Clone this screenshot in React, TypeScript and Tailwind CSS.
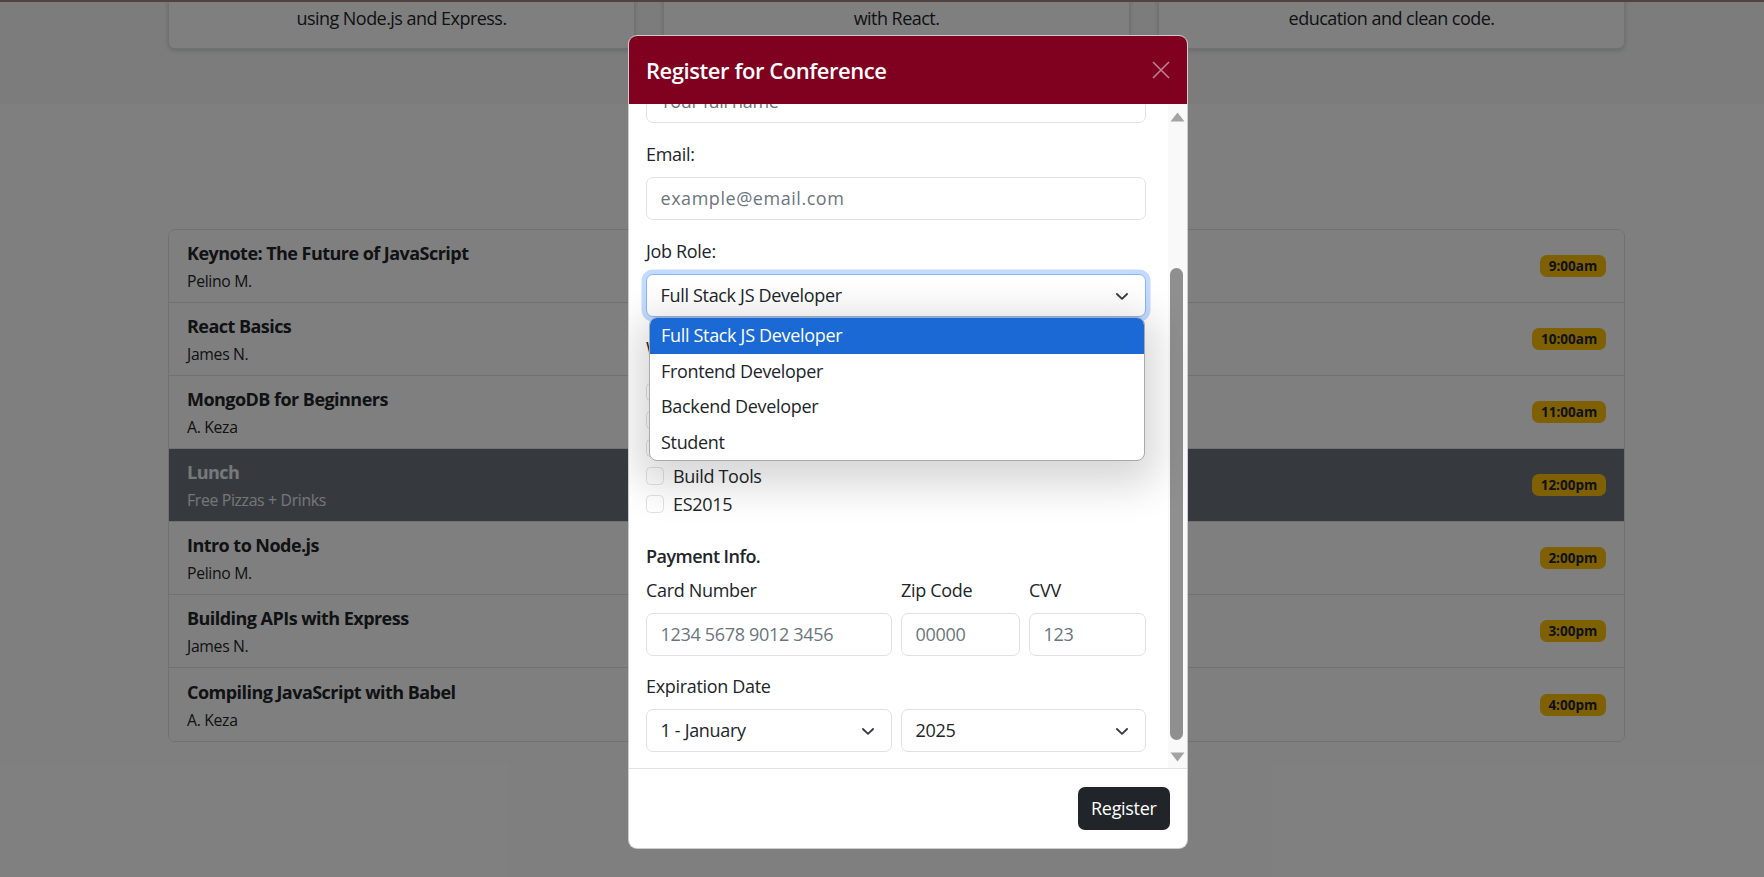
import React from "react";

const sessions = [
  { title: "Keynote: The Future of JavaScript", who: "Pelino M.", time: "9:00am" },
  { title: "React Basics", who: "James N.", time: "10:00am" },
  { title: "MongoDB for Beginners", who: "A. Keza", time: "11:00am" },
  { title: "Lunch", who: "Free Pizzas + Drinks", time: "12:00pm", lunch: true },
  { title: "Intro to Node.js", who: "Pelino M.", time: "2:00pm" },
  { title: "Building APIs with Express", who: "James N.", time: "3:00pm" },
  { title: "Compiling JavaScript with Babel", who: "A. Keza", time: "4:00pm" },
];

const cards = [
  "using Node.js and Express.",
  "with React.",
  "education and clean code.",
];

const workshops = ["Node.js", "React", "MongoDB", "Build Tools", "ES2015"];
const roles = ["Full Stack JS Developer", "Frontend Developer", "Backend Developer", "Student"];

function Chevron() {
  return (
    <svg width="18" height="14" viewBox="0 0 16 12" fill="none" className="shrink-0">
      <path d="M3.5 4.2 8 8.5l4.5-4.3" stroke="#343a40" strokeWidth="1.6" strokeLinecap="round" strokeLinejoin="round" />
    </svg>
  );
}

function Field({ text, placeholder = true, className = "" }: { text: string; placeholder?: boolean; className?: string }) {
  return (
    <div
      className={`h-[43px] rounded-[7px] border border-[#dee2e6] bg-white px-[13.5px] flex items-center text-[18px] ${
        placeholder ? "text-[#6c757d]" : "text-[#212529]"
      } ${className}`}
    >
      {text}
    </div>
  );
}

function Select({ text, focused = false, className = "" }: { text: string; focused?: boolean; className?: string }) {
  return (
    <div
      className={`h-[43px] rounded-[7px] border bg-white pl-[13.5px] pr-[14px] flex items-center justify-between text-[18px] text-[#212529] ${
        focused ? "border-[#86b7fe] shadow-[0_0_0_4.5px_rgba(13,110,253,0.25)]" : "border-[#dee2e6]"
      } ${className}`}
    >
      <span>{text}</span>
      <Chevron />
    </div>
  );
}

export default function App() {
  return (
    <div className="relative h-[877px] w-[1764px] overflow-hidden bg-white font-['Open_Sans',sans-serif] tracking-[-0.02em] text-[#212529]">
      <div className="h-[2px] bg-[#aa8088]" />
      {/* top section with feature cards (scrolled) */}
      <section className="h-[102px] overflow-hidden bg-[#f8f9fa]">
        <div className="ml-[168px] mt-[-103px] grid w-[1457px] grid-cols-3 gap-x-[28px]">
          {cards.map((c) => (
            <div
              key={c}
              className="flex h-[150px] flex-col items-center justify-end rounded-[7px] border border-[#dee2e6] bg-white pb-[16px] text-[18px] leading-[27px] tracking-[-0.03em] shadow-[0_2px_5px_rgba(0,0,0,0.15)]"
            >
              {c}
            </div>
          ))}
        </div>
      </section>

      {/* schedule */}
      <section className="pt-[125px]">
        <div className="ml-[168px] w-[1457px] overflow-hidden rounded-[7px] border border-[#dee2e6]">
          {sessions.map((s, i) => (
            <div
              key={s.title}
              className={`flex h-[73px] items-center justify-between px-[18px] ${
                i < sessions.length - 1 ? "border-b border-[#dee2e6]" : ""
              } ${s.lunch ? "bg-[#6c757d]" : "bg-white"}`}
            >
              <div className="flex flex-col">
                <div
                  className={`text-[18px] font-bold leading-[26px] tracking-[-0.03em] ${
                    s.lunch ? "text-[#f1f3f5]" : "text-[#212529]"
                  }`}
                >
                  {s.title}
                </div>
                <div className={`mt-[4px] text-[15.75px] leading-[22px] ${s.lunch ? "text-[#e9ecef]" : "text-[#212529]"}`}>
                  {s.who}
                </div>
              </div>
              <span className="rounded-[6.75px] bg-[#ffc107] px-[8.8px] py-[4px] text-[13.5px] font-bold leading-[14px] tracking-normal text-[#212529]">
                {s.time}
              </span>
            </div>
          ))}
        </div>
      </section>

      {/* backdrop */}
      <div className="absolute inset-0 bg-black/50" />

      {/* modal */}
      <div className="absolute left-[628px] top-[35px] flex w-[560px] flex-col overflow-hidden rounded-[9px] border border-black/20 bg-white">
        <div className="flex h-[68px] shrink-0 items-center justify-between bg-[#800020] px-[17px]">
          <h5 className="text-[22px] font-semibold leading-[27px] tracking-[-0.02em] text-white">Register for Conference</h5>
          <svg width="18" height="18" viewBox="0 0 18 18" className="opacity-50">
            <path d="M1 1 17 17M17 1 1 17" stroke="#fff" strokeWidth="1.6" />
          </svg>
        </div>

        <div className="relative h-[664px] shrink-0 overflow-hidden">
          <div className="mt-[-24px] pl-[17px] pr-[41px]">
            <Field text="Your full name" className="mb-[18px]" />
            <div className="mb-[9px] text-[18px] leading-[27px]">Email:</div>
            <Field text="example@email.com" className="mb-[18px] tracking-[0.03em]" />
            <div className="mb-[9px] text-[18px] leading-[27px]">Job Role:</div>
            <Select text="Full Stack JS Developer" focused className="mb-[18px]" />
            <div className="mb-[16px] text-[18px] leading-[27px]">Which workshops would you like to attend?</div>
            {workshops.map((w) => (
              <div key={w} className="flex h-[28px] items-center gap-[9px]">
                <span className="h-[18px] w-[18px] rounded-[4.5px] border border-[#dee2e6] bg-white" />
                <span className="text-[18px] leading-[27px]">{w}</span>
              </div>
            ))}
            <div className="mt-[25px] text-[18px] font-semibold leading-[27px] tracking-[-0.03em]">Payment Info.</div>
            <div className="mt-[7px] flex gap-x-[9px]">
              <div className="w-[246px]">
                <div className="mb-[9px] text-[18px] leading-[27px]">Card Number</div>
                <Field text="1234 5678 9012 3456" />
              </div>
              <div className="w-[119px]">
                <div className="mb-[9px] text-[18px] leading-[27px]">Zip Code</div>
                <Field text="00000" />
              </div>
              <div className="w-[117px]">
                <div className="mb-[9px] text-[18px] leading-[27px]">CVV</div>
                <Field text="123" />
              </div>
            </div>
            <div className="mb-[9px] mt-[17px] text-[18px] leading-[27px]">Expiration Date</div>
            <div className="flex gap-x-[9px]">
              <Select text="1 - January" className="w-[246px]" />
              <Select text="2025" className="w-[245px]" />
            </div>
          </div>

          {/* scrollbar */}
          <div className="absolute right-0 top-0 h-full w-[19px] bg-[#f9f9f9]">
            <svg width="15" height="10" viewBox="0 0 15 10" className="absolute left-[2px] top-[8px]">
              <path d="M7.5 0.5 14.5 9.5H0.5Z" fill="#a3a3a3" />
            </svg>
            <div className="absolute left-[2px] top-[164px] h-[472px] w-[13px] rounded-full bg-[#8f8f8f]" />
            <svg width="15" height="10" viewBox="0 0 15 10" className="absolute left-[2px] top-[648px]">
              <path d="M0.5 0.5H14.5L7.5 9.5Z" fill="#a3a3a3" />
            </svg>
          </div>

          {/* open dropdown of Job Role */}
          <div className="absolute left-[20px] top-[213px] z-10 w-[496px] overflow-hidden rounded-[8px] border border-[#a9a9a9] bg-white shadow-[0_12px_40px_12px_rgba(0,0,0,0.16)]">
            {roles.map((r, i) => (
              <div
                key={r}
                className={`flex h-[35.5px] items-center pl-[11px] text-[18px] ${
                  i === 0 ? "bg-[#1a69d4] text-white" : "text-[#212529]"
                }`}
              >
                {r}
              </div>
            ))}
          </div>
        </div>

        <div className="flex shrink-0 justify-end border-t border-[#dee2e6] p-[18px] pr-[17px]">
          <button className="h-[43px] rounded-[7px] bg-[#212529] px-[13.5px] text-[18px] text-white">Register</button>
        </div>
      </div>
    </div>
  );
}
